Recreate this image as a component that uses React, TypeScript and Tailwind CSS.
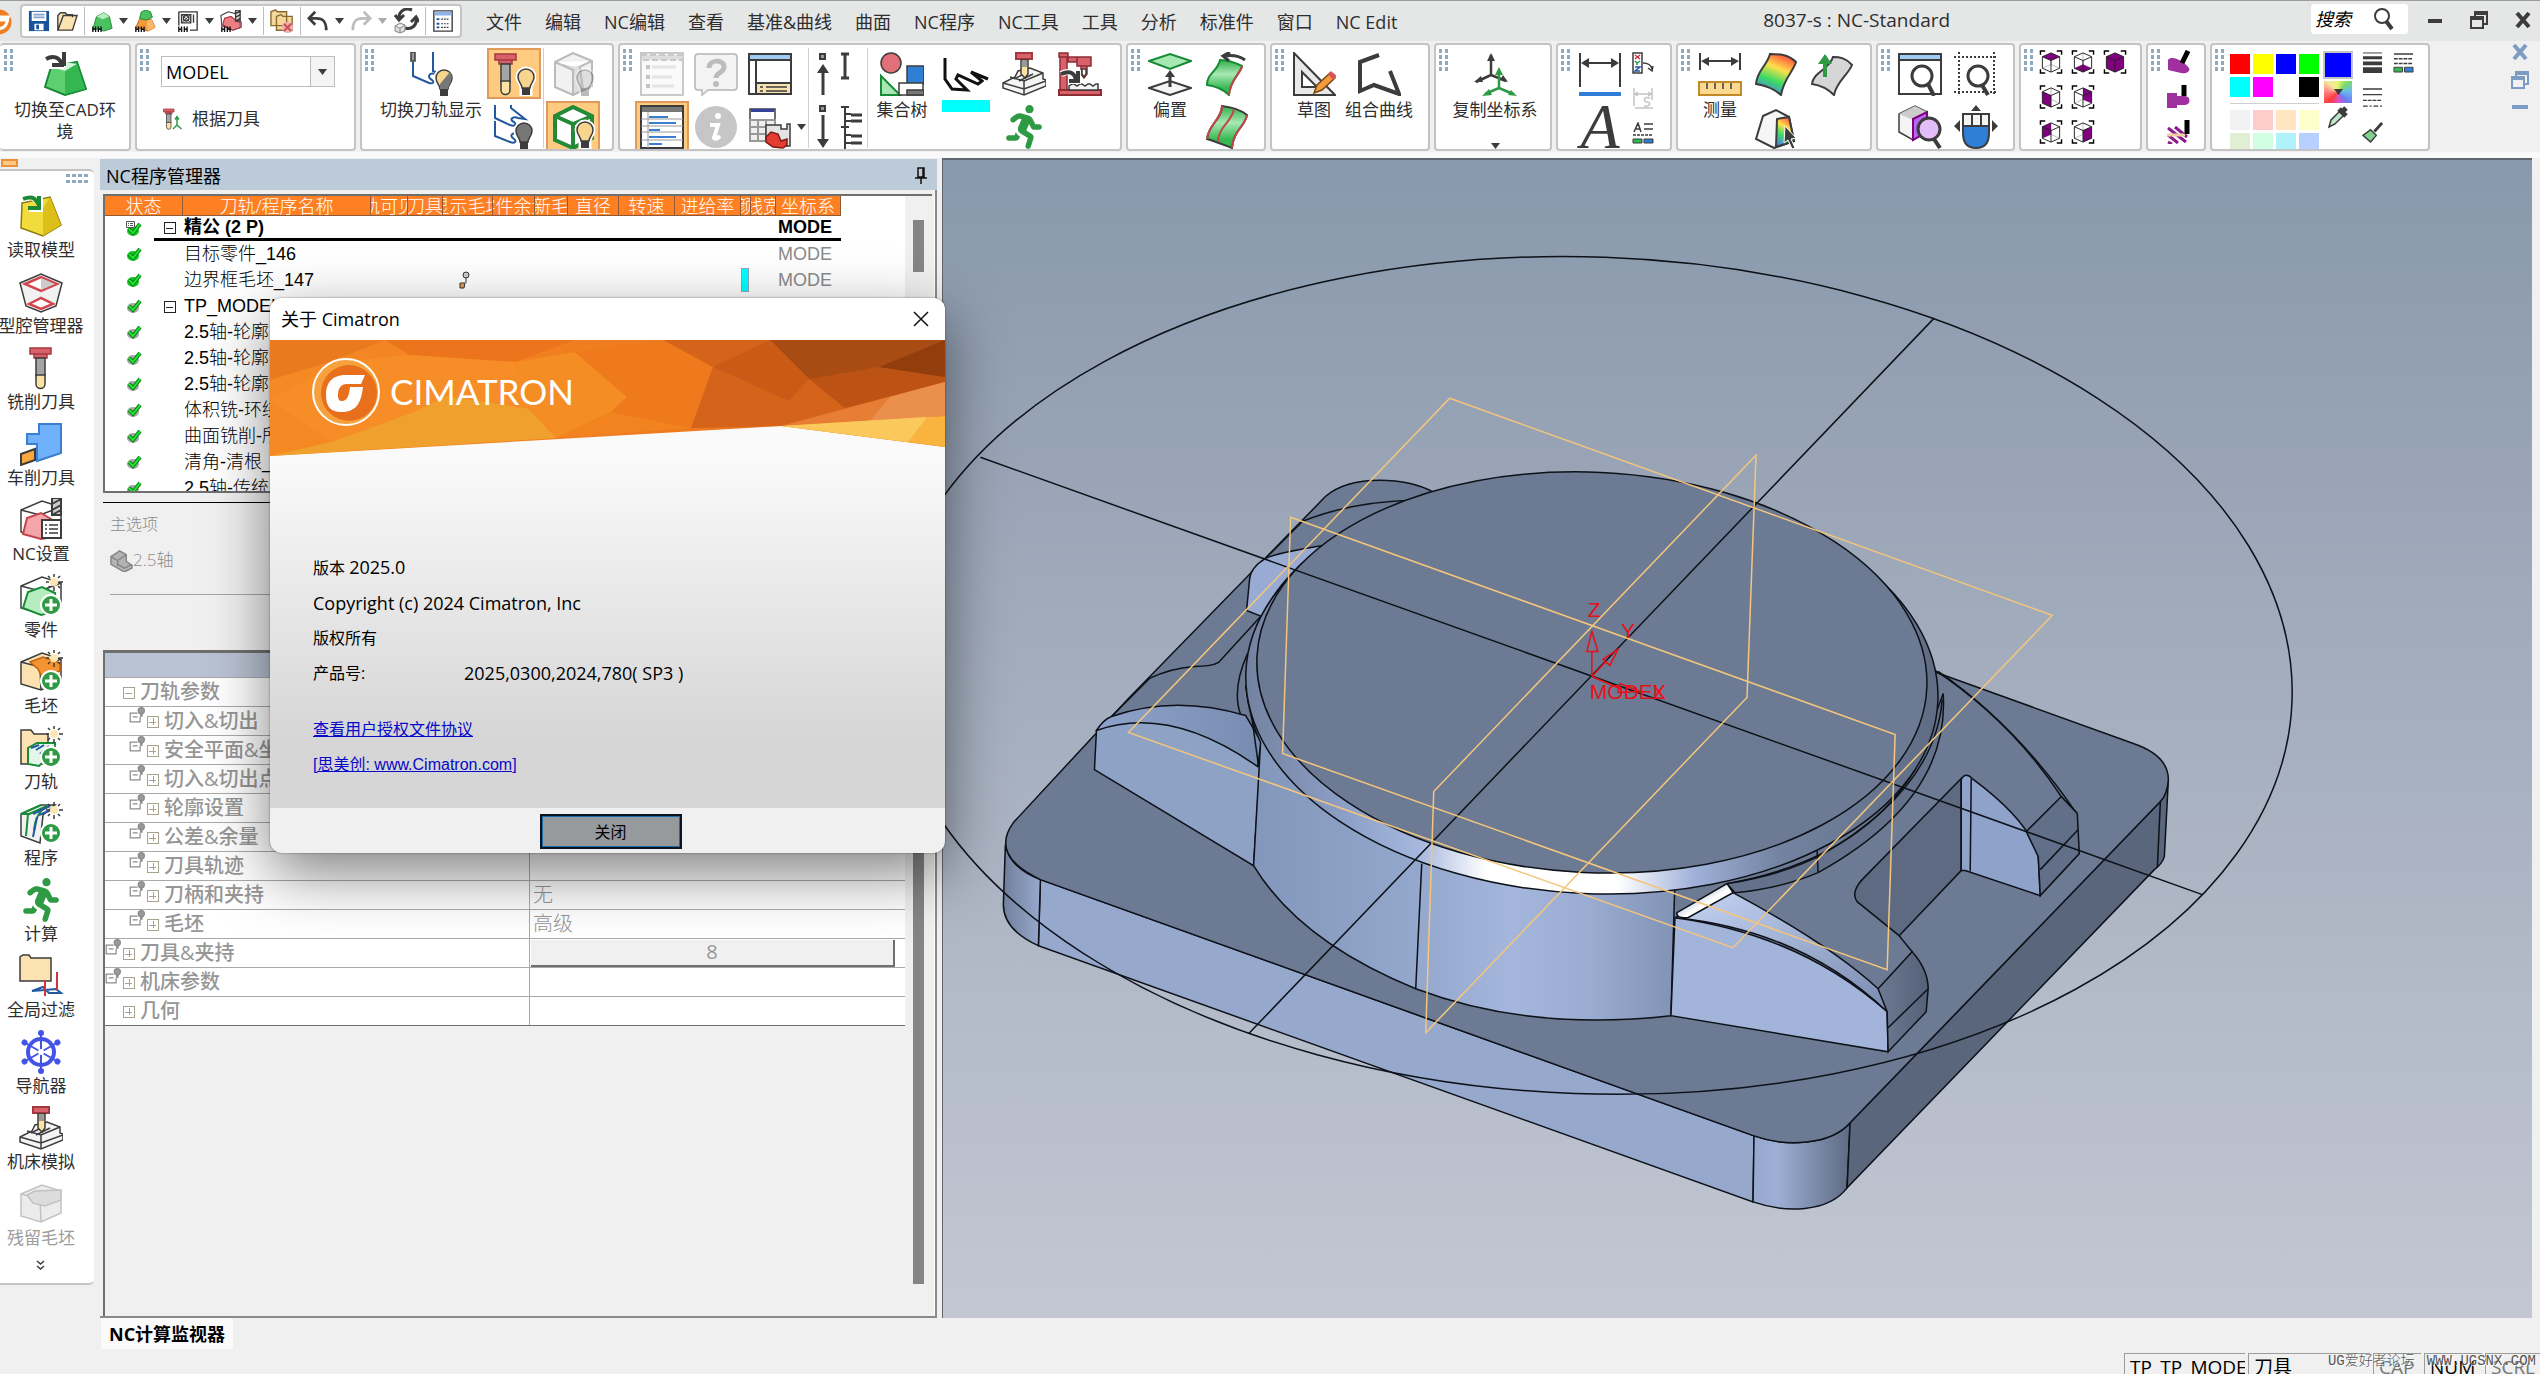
import { useState } from "react";
import type { ReactNode } from "react";
import clsx from "clsx";
import { FaRunning } from "react-icons/fa";

const INK = "#3c3c3c";
const RED = "#d9626a";
const GREEN = "#2f9a44";

function Icon({ size = "size-11", box = "0 0 44 44", children }: { size?: string; box?: string; children: ReactNode }) {
  return (
    <svg className={clsx("block shrink-0", size)} viewBox={box} fill="none" stroke={INK} strokeWidth="2" aria-hidden="true">
      {children}
    </svg>
  );
}

function Bulb({ x, y, fill = "#f7d58e" }: { x: number; y: number; fill?: string }) {
  return (
    <g transform={`translate(${x} ${y})`}>
      <path d="M8 0a9 9 0 0 0-9 9c0 5 4 7 4 11v8h10v-8c0-4 4-6 4-11a9 9 0 0 0-9-9z" fill="#fff" stroke="#fff" strokeWidth="3" />
      <path d="M8 1a8 8 0 0 0-8 8c0 5 4 7 4 11h8c0-4 4-6 4-11a8 8 0 0 0-8-8z" fill={fill} stroke={INK} strokeWidth="1.5" />
      <path d="M4 20h8v7H4z" fill={INK} stroke="none" />
    </g>
  );
}

function Cutter() {
  return (
    <>
      <path d="M7 2h21v6H7zM11 8h13v4H11z" fill={RED} stroke="#a4383f" strokeWidth="1.5" />
      <path d="M13 12h9v18h-9z" fill="#a5a5a5" strokeWidth="1.5" />
      <path d="M13 29h9v9a4.5 4.5 0 0 1-9 0z" fill="#fbe2a0" strokeWidth="1.5" />
    </>
  );
}

function PlusBadge({ x = 23, y = 22 }: { x?: number; y?: number }) {
  return (
    <g transform={`translate(${x} ${y})`}>
      <circle cx="9" cy="9" r="10" fill={GREEN} stroke="#fff" />
      <path d="M9 3v12M3 9h12" stroke="#fff" strokeWidth="3" />
    </g>
  );
}

function Spark() {
  return (
    <g stroke={INK} strokeWidth="1.5">
      <circle cx="35" cy="8" r="4" fill="#fde7b0" stroke="none" />
      <path d="M35 0v3M35 13v4M27 8h3M40 8h4M29 2l2 2M41 2l-2 2M29 14l2-2M41 14l-2-2" />
    </g>
  );
}

function WireBox({ fill = "none", stroke = INK }: { fill?: string; stroke?: string }) {
  return <path d="M2 12l21-9 19 6v22l-20 9-20-6zM2 12l19 5 21-8M21 17l1 23" fill={fill} stroke={stroke} strokeWidth="1.5" />;
}

function Mill() {
  return (
    <>
      <path d="M1 31l12-6 3-6 12-3 13 5v6l3 1v6L22 43 1 36z" fill="#f4f4f4" strokeWidth="1.5" />
      <path d="M1 31l21 6 22-8M8 25l14 4 19-8M22 29v14M12 27l14-7M17 29l14-7" strokeWidth="1.5" />
      <path d="M14 1h16v6H14z" fill={RED} stroke="#a4383f" />
      <path d="M19 8h7v14l-3 4-4-4z" fill="#fbe2a0" strokeWidth="1.5" />
      <path d="M20 8h5v7h-5z" fill="#999" stroke="none" />
    </>
  );
}

function Caret({ muted = false }: { muted?: boolean }) {
  return (
    <svg className="block h-[6px] w-[9px] shrink-0" viewBox="0 0 9 6" fill={muted ? "#aaa" : INK} aria-hidden="true">
      <path d="M0 0h9L4.5 6z" />
    </svg>
  );
}

function IconButton({ label, on = false, className, children }: { label: string; on?: boolean; className?: string; children: ReactNode }) {
  return (
    <button
      type="button"
      aria-label={label}
      aria-pressed={on}
      className={clsx(
        "flex h-[51px] shrink-0 items-center justify-center",
        on && "border-2 border-[#df9a5c] bg-[#ffcb80]",
        className ?? "w-11"
      )}
    >
      {children}
    </button>
  );
}

function LabelButton({ label, className, more = false, children }: { label: string; className: string; more?: boolean; children: ReactNode }) {
  return (
    <button type="button" className={clsx("flex shrink-0 flex-col items-center text-center text-[17px] leading-[22px]", className)}>
      <span className="flex h-[51px] items-center">{children}</span>
      <span>{label}</span>
      {more && (
        <span className="mt-[22px]">
          <Caret />
        </span>
      )}
    </button>
  );
}

function Group({ className, children }: { className: string; children: ReactNode }) {
  return (
    <section className={clsx("flex h-[108px] shrink-0 items-start overflow-hidden rounded-[4px] border-2 border-[#c4c4c4] bg-white pt-[3px]", className)}>
      {children}
    </section>
  );
}

function Grip({ className = "w-5" }: { className?: string }) {
  return (
    <span className={clsx("block shrink-0 pt-px pl-[3px]", className)}>
      <svg className="block h-[22px] w-[10px]" viewBox="0 0 10 22" fill="#8fa9bd" aria-hidden="true">
        {[0, 6, 12, 18].map((y) => (
          <path key={y} d={`M0 ${y}h3v4h-3zM6 ${y}h3v4h-3z`} />
        ))}
      </svg>
    </span>
  );
}

const Rows = ({ children }: { children: ReactNode }) => <div className="flex shrink-0 flex-col gap-[2px]">{children}</div>;
const Rule = () => <span className="mx-[2px] block h-[100px] w-px shrink-0 bg-[#cfcfcf]" />;

const menus = ["文件", "编辑", "NC编辑", "查看", "基准&曲线", "曲面", "NC程序", "NC工具", "工具", "分析", "标准件", "窗口", "NC Edit"];

function QuickAccess() {
  const sep = <span className="h-7 w-px shrink-0 bg-[#bdbdbd]" />;
  const feet = <path d="M2 18v6M5 18v6M2 21h3M8 18v6M11 18v6M8 21h3" stroke="#111" strokeWidth="1.5" />;
  return (
    <div className="flex h-[34px] w-[442px] shrink-0 items-center justify-between rounded-[4px] border-2 border-[#c4c4c4] bg-white px-[6px]">
      <button type="button" aria-label="保存">
        <Icon size="size-[22px]" box="0 0 24 24">
          <path d="M1 1h22v22H1z" fill="#17539c" stroke="none" />
          <path d="M4 2h16v10H4zM7 15h10v7H7z" fill="#fff" stroke="none" />
          <path d="M6 5h12M6 8h12" stroke="#7fa3cc" />
          <path d="M9 16h3v5H9z" fill="#17539c" stroke="none" />
        </Icon>
      </button>
      <button type="button" aria-label="打开">
        <Icon size="size-[22px]" box="0 0 24 24">
          <path d="M2 22V6l3-3h5l2 2h6v3M2 22L8 6h15l-5 16z" fill="#fbe3b0" strokeWidth="1.5" />
        </Icon>
      </button>
      {sep}
      <button type="button" aria-label="新零件">
        <Icon size="size-[22px]" box="0 0 24 24">
          <path d="M2 21L6 7l8-4 6 4 3 13-9 3-5-2z" fill="#49c25f" stroke="#21843a" strokeWidth="1" />
          <path d="M6 7l8-4 6 4-7 3z" fill="#b7ecc0" stroke="none" />
          {feet}
        </Icon>
      </button>
      <Caret />
      <button type="button" aria-label="新装配">
        <Icon size="size-[22px]" box="0 0 24 24">
          <path d="M2 19l4-9h13l4 9-8 4z" fill="#f39a3a" stroke="#b3641a" strokeWidth="1" />
          <path d="M14 12l5-2 4 9-8 4z" fill="#f9b869" stroke="none" />
          <path d="M6 9l2-7 5-2 5 2 2 6-7 3z" fill="#49c25f" stroke="#21843a" strokeWidth="1" />
          {feet}
        </Icon>
      </button>
      <Caret />
      <button type="button" aria-label="新图纸">
        <Icon size="size-[22px]" box="0 0 24 24">
          <path d="M2 2h20v20h-8M2 2v15M5 5h10v9H5zM18 5v9" strokeWidth="1.5" />
          <circle cx="10" cy="9" r="3" strokeWidth="1.5" />
          <path d="M5 5l10 9M15 5L5 14" strokeWidth="1" />
          {feet}
        </Icon>
      </button>
      <Caret />
      <button type="button" aria-label="新NC">
        <Icon size="size-[22px]" box="0 0 24 24">
          <path d="M1 6l8-4 8 2v4l6 5v6l-9 3-12-5z" fill="#fff" strokeWidth="1.2" />
          <path d="M3 16l2-7 7-2 6 5 4 2v5l-8 3z" fill="#ec7f84" stroke="#a4383f" strokeWidth="1.2" />
          <path d="M17 0h5v12h-5zM17 4l5-3M17 8l5-3M17 12l5-3" fill="#ddd" strokeWidth="1.5" />
          {feet}
        </Icon>
      </button>
      <Caret />
      {sep}
      <button type="button" aria-label="关闭文件">
        <Icon size="h-[26px] w-6" box="0 0 26 26">
          <path d="M1 18V3l5-2 2 2h10v15zM7 23V8l5-2 2 2h10v15z" fill="#f3d79b" stroke="#8a6a32" strokeWidth="1.5" />
          <circle cx="19" cy="20" r="6" fill="#e9b1b1" stroke="none" />
          <path d="M15 16l8 8M23 16l-8 8" stroke="#cc4a50" />
        </Icon>
      </button>
      {sep}
      <button type="button" aria-label="撤销">
        <Icon size="size-[22px]" box="0 0 24 24">
          <path d="M9 2L2 9l7 7M3 9h7c8 0 11 4 11 13" strokeWidth="3" />
        </Icon>
      </button>
      <Caret />
      <button type="button" aria-label="重做">
        <Icon size="size-[22px]" box="0 0 24 24">
          <path d="M15 2l7 7-7 7M21 9h-7C6 9 3 13 3 22" stroke="#bcbcbc" strokeWidth="3" />
        </Icon>
      </button>
      <Caret muted />
      <button type="button" aria-label="刷新">
        <Icon size="size-[26px]" box="0 0 26 26">
          <path d="M19 2C12-1 6 3 6 10M2 7l4 5 5-5M12 20c7 2 12-3 11-9M18 14l5-5 3 5" strokeWidth="3" />
          <path d="M2 18l5-3 5 2v6l-5 2-5-2zM2 18l5 2 5-3M7 20v5" fill="#ddd" stroke="#888" strokeWidth="1" />
        </Icon>
      </button>
      {sep}
      <button type="button" aria-label="列表">
        <Icon size="size-[22px]" box="0 0 24 24">
          <path d="M2 1h20v22H2z" fill="#fff" strokeWidth="1.5" />
          <path d="M3 2h18v4H3z" fill="#8cb4ea" stroke="none" />
          <path d="M5 10h3M5 15h3M5 19h3" stroke="#17539c" />
          <path d="M10 10h9M10 15h9M10 19h9" strokeDasharray="2 1" strokeWidth="1.2" />
        </Icon>
      </button>
    </div>
  );
}

const restore = <path d="M5 6V1h12v12h-4M1 6h12v11H1zM1 8h12M5 3h12" />;

function TitleBar() {
  return (
    <header className="flex h-[41px] shrink-0 items-start border-t border-[#9c9c9c] bg-[#e5e6e6] pt-[3px]">
      <svg className="mt-[5px] mr-[8px] block h-[26px] w-3 shrink-0" viewBox="14 0 12 26" aria-hidden="true">
        <circle cx="13" cy="13" r="12.5" fill="#ef7d22" />
        <path d="M10 8h12l-2 3h-7M22 8c-1 9-4 12-12 12" fill="none" stroke="#fff" strokeWidth="3" />
      </svg>
      <QuickAccess />
      <nav className="ml-[24px] flex shrink-0 gap-[23px] pt-[6px] text-[18px] leading-6 whitespace-nowrap">
        {menus.map((m) => (
          <button key={m} type="button">
            {m}
          </button>
        ))}
      </nav>
      <p className="grow pl-[5px] text-center text-[19px] leading-8 whitespace-nowrap">8037-s : NC-Standard</p>
      <label className="mr-[18px] flex h-[30px] w-[97px] shrink-0 items-center rounded-[3px] bg-white px-1">
        <input
          aria-label="搜索"
          placeholder="搜索"
          className="w-14 min-w-0 bg-transparent text-[18px] leading-6 text-black italic outline-none placeholder:text-black"
        />
        <Icon size="size-[24px]" box="0 0 24 24">
          <circle cx="11" cy="9" r="7" />
          <path d="M15 14l6 8" strokeWidth="4" />
        </Icon>
      </label>
      <div className="flex w-[114px] shrink-0 items-center gap-[26px] pt-[7px]">
        <button type="button" aria-label="最小化">
          <Icon size="size-[18px]" box="0 0 18 18">
            <path d="M2 10h14" strokeWidth="4" />
          </Icon>
        </button>
        <button type="button" aria-label="还原">
          <Icon size="size-[18px]" box="0 0 18 18">{restore}</Icon>
        </button>
        <button type="button" aria-label="退出">
          <Icon size="size-[18px]" box="0 0 18 18">
            <path d="M3 2l12 14M15 2L3 16" strokeWidth="4" />
          </Icon>
        </button>
      </div>
    </header>
  );
}

const faces = {
  top: "M3 7l9-4 9 4-9 4z",
  bottom: "M3 19l9-4 9 4-9 4z",
  left: "M3 7l9 4v12l-9-4z",
  back: "M12 3l9 4v12l-9-4z",
  rear: "M3 7l9-4v12l-9 4z",
  right: "M12 11l9-4v12l-9 4z",
  all: "M3 7l9-4 9 4v12l-9 4-9-4z",
};

function ViewCube({ face }: { face: keyof typeof faces }) {
  return (
    <button type="button" aria-label={`视图 ${face}`}>
      <Icon size="size-6" box="0 0 24 25">
        <path d="M12 3v12l9 4M12 15l-9 4" stroke="#bbb" strokeWidth="1" />
        <path d={faces[face]} fill="#800080" stroke="none" />
        <path d={`${faces.all}M3 7l9 4 9-4M12 11v12`} stroke="#222" strokeWidth="1" />
        <path d="M1 5V1h5M18 1h5v4M1 20v4h5M18 24h5v-4" stroke="#000" strokeWidth="1.5" />
      </Icon>
    </button>
  );
}

const strong = ["bg-[#ff0000]", "bg-[#ffff00]", "bg-[#0000ff]", "bg-[#00ff00]", "bg-[#00ffff]", "bg-[#ff00ff]", "bg-white", "bg-black"];
const pale = ["bg-[#f2f2f4]", "bg-[#ffcccc]", "bg-[#ffe6c0]", "bg-[#ffffcc]", "bg-[#e0efd4]", "bg-[#d0ffe4]", "bg-[#b0f2fa]", "bg-[#b8d0ff]"];

function Swatches({ colors }: { colors: string[] }) {
  return (
    <div className="grid grid-cols-4 gap-[3px]">
      {colors.map((c) => (
        <button key={c} type="button" aria-label={c} className={clsx("size-5", c)} />
      ))}
    </div>
  );
}

function Ribbon() {
  return (
    <div className="flex shrink-0 items-start gap-1 border-b-[6px] border-[#fafafa] bg-[#f0f0f0] pt-[2px] pb-[1px] text-[#2e2e2e]">
      <Group className="w-[131px] border-l-0 pl-[1px]">
        <Grip className="w-2" />
        <LabelButton label="切换至CAD环境" className="w-[112px]">
          <Icon>
            <path d="M8 15l26-5 9 27-21 6-20-8z" fill="#5dcf70" stroke="#178c36" />
            <path d="M8 15l13-5 13 2-12 7z" fill="#d5f5da" stroke="none" />
            <path d="M22 19v23l20-5-8-25z" fill="#34b650" stroke="none" />
            <path d="M3 7c8-6 16-2 17 6M20 0v15M6 14h15" stroke="#fff" strokeWidth="6" />
            <path d="M3 7c7-4 13-2 16 5M21 0v14M9 13h12" strokeWidth="4" />
          </Icon>
        </LabelButton>
      </Group>
      <Group className="w-[221px]">
        <Grip className="w-6" />
        <div className="flex flex-col gap-[20px] pt-2">
          <div className="flex h-[31px] w-[174px] items-stretch border border-[#bdbdbd]">
            <select aria-label="坐标系" className="w-[148px] appearance-none bg-white pl-1 text-[18px] leading-7 text-black">
              <option>MODEL</option>
            </select>
            <span className="flex w-[24px] items-center justify-center border-l border-[#bdbdbd] bg-[#f4f4f6]">
              <Caret />
            </span>
          </div>
          <button type="button" className="flex items-center gap-[9px] text-[17px] leading-6">
            <Icon size="size-[22px]" box="4 0 40 44">
              <Cutter />
              <path d="M34 18v16l-8 8M34 34l9 8M30 23l4-6 4 6" stroke={GREEN} strokeWidth="3" />
            </Icon>
            根据刀具
          </button>
        </div>
      </Group>
      <Group className="w-[254px]">
        <Grip className="w-[18px]" />
        <LabelButton label="切换刀轨显示" className="mr-[5px] w-[102px]">
          <Icon>
            <path d="M2 0v9h4V0z" fill="#999" strokeWidth="1.5" />
            <path d="M4 10v14l16 7c4 1 6-1 3-3-6-3-2-8 3-6M24 0v19l8 3" stroke="#235a9f" />
            <Bulb x={27} y={17} />
            <path d="M41 20c4 5 0 10-2 17h-8v-5z" fill="#777" stroke="none" />
          </Icon>
        </LabelButton>
        <Rows>
          <IconButton label="显示刀具" on className="w-[54px]">
            <Icon>
              <g transform="translate(-4 0)">
                <Cutter />
              </g>
              <Bulb x={26} y={16} />
            </Icon>
          </IconButton>
          <IconButton label="显示刀轨" className="w-[54px]">
            <Icon>
              <path
                d="M3 0v13l15 7c5 2 7-1 4-3-6-3 0-6 4-4l7 1-14-11V0M3 16v15l15 6c5 2 7-1 4-3-6-4 0-7 3-5"
                stroke="#235a9f"
              />
              <Bulb x={24} y={17} fill="#777" />
            </Icon>
          </IconButton>
        </Rows>
        <Rule />
        <Rows>
          <IconButton label="显示零件" className="w-[54px]">
            <Icon>
              <path d="M4 10L22 1l19 8v25l-19 9-18-8zM4 10l18 8 19-9M22 18v25" fill="#f1f1f1" stroke="#bbb" />
              <path d="M12 13l10 5v25l10-5-3-23" fill="#ddd" stroke="#bbb" />
              <g opacity=".35">
                <Bulb x={26} y={17} fill="#bbb" />
              </g>
            </Icon>
          </IconButton>
          <IconButton label="显示毛坯" on className="w-[54px]">
            <Icon>
              <path d="M4 11L22 2l19 9v22l-19 10-18-8z" fill="#fff" stroke="#238a38" strokeWidth="4" />
              <path d="M4 11l18 8 19-8M22 19v23" stroke="#238a38" strokeWidth="4" />
              <Bulb x={26} y={16} />
            </Icon>
          </IconButton>
        </Rows>
      </Group>
      <Group className="w-[504px]">
        <Grip className="w-[15px]" />
        <Rows>
          <IconButton label="列表" className="w-[54px]">
            <Icon>
              <path d="M1 1h42v42H1z" fill="#fafafa" stroke="#c9c9c9" />
              <path d="M1 3h42v5H1z" fill="#ddd" stroke="#c9c9c9" strokeDasharray="6 3" />
              <path d="M12 15h24M12 25h20M12 34h22" stroke="#e4e4e4" strokeWidth="3" />
              <path d="M6 15h4M6 25h4M6 34h4" stroke="#c4c4c4" strokeWidth="4" />
            </Icon>
          </IconButton>
          <IconButton label="程序管理器" on className="w-[54px]">
            <Icon>
              <path d="M1 1h42v42H1z" fill="#fff" />
              <path d="M2 2h40v5H2z" fill="#777" stroke="none" />
              <path d="M1 14h42M1 21h42M1 27h42M1 35h42M8 7v36" stroke="#999" strokeWidth="1" />
              <path d="M9 12h19M9 18h27M9 25h11M9 32h27M9 39h13" stroke="#3a7fd0" />
            </Icon>
          </IconButton>
        </Rows>
        <Rows>
          <IconButton label="帮助" className="w-[54px]">
            <Icon>
              <path d="M4 2h36q3 0 3 3v30q0 3-3 3H14l-6 5v-5H4q-3 0-3-3V5q0-3 3-3z" fill="#f3f3f3" stroke="#c4c4c4" />
              <path d="M15 16c0-9 15-9 15-1 0 6-8 5-8 11" stroke="#bcbcbc" strokeWidth="5" />
              <circle cx="22" cy="32" r="3" fill="#bcbcbc" stroke="none" />
            </Icon>
          </IconButton>
          <IconButton label="信息" className="w-[54px]">
            <Icon>
              <circle cx="22" cy="22" r="21" fill="#c6c6c6" stroke="none" />
              <circle cx="24" cy="11" r="3" fill="#fff" stroke="none" />
              <path d="M16 20h8l-4 13q2 2 6-2" stroke="#fff" strokeWidth="4" />
            </Icon>
          </IconButton>
        </Rows>
        <Rows>
          <IconButton label="布局" className="w-[54px]">
            <Icon>
              <path d="M1 2h42v40H1z" fill="#fff" />
              <path d="M2 3h40v4H2z" fill="#9fcbf5" stroke="none" />
              <path d="M1 8h42M8 8v34" />
              <path d="M8 31h35v11H8z" fill="#f6e2b0" />
              <path d="M12 35h3M12 39h3M18 35h21M18 39h21" strokeWidth="1.5" />
            </Icon>
          </IconButton>
          <div className="flex items-center">
            <IconButton label="报告" className="w-[54px]">
              <Icon>
                <path d="M2 4h25v11H2z" fill="#fff" strokeWidth="1.5" />
                <path d="M3 4h23v3H3z" fill="#33429a" stroke="none" />
                <path d="M2 15h25v21H2zM2 22h22M2 29h18M10 15v20M18 15v20" fill="#eee" stroke="#999" />
                <path d="M18 20h15v4h6v-5h3v22H26l-8-6z" fill="#e4e4e4" strokeWidth="1.5" />
                <path d="M18 32l5-5 7 2 3 7 6-2v6l-4 3-10-1-7-5z" fill="#e43c30" stroke="#7c1a14" strokeWidth="1.5" />
              </Icon>
            </IconButton>
            <Caret />
          </div>
        </Rows>
        <Rule />
        <Rows>
          <IconButton label="上移" className="w-6">
            <Icon size="h-11 w-5" box="0 0 20 44">
              <path d="M7 2h5v5H7z" fill="#999" />
              <path d="M10 43V18" strokeWidth="3" />
              <path d="M4 21l6-9 6 9z" fill={INK} stroke="none" />
            </Icon>
          </IconButton>
          <IconButton label="下移" className="w-6">
            <Icon size="h-11 w-5" box="0 0 20 44">
              <path d="M7 1h5v5H7z" fill="#999" />
              <path d="M10 10v26" strokeWidth="3" />
              <path d="M4 34l6 9 6-9z" fill={INK} stroke="none" />
            </Icon>
          </IconButton>
        </Rows>
        <Rows>
          <IconButton label="展开" className="w-[30px]">
            <Icon size="h-11 w-6" box="0 0 24 44">
              <path d="M3 2h8M7 2v24M3 26h8" strokeWidth="3" />
            </Icon>
          </IconButton>
          <IconButton label="折叠" className="w-[30px]">
            <Icon size="h-11 w-6" box="0 0 24 44">
              <path d="M3 2h8M7 2v42M7 9h6M7 16h6M3 22h8M7 30h6M7 38h6" />
              <path d="M13 10h11M13 16h11M13 31h11M13 38h11" strokeWidth="3" />
            </Icon>
          </IconButton>
        </Rows>
        <Rule />
        <LabelButton label="集合树" className="ml-[5px] w-[54px]">
          <Icon>
            <circle cx="11" cy="11" r="10" fill="#e27078" strokeWidth="1.5" />
            <path d="M27 14h17v18H27z" fill="#2f7fd6" strokeWidth="1.5" />
            <path d="M1 24v19h19z" fill="#a9e6b5" stroke="#178c36" />
            <path d="M19 31h24v12H19z" fill="#fff" strokeWidth="1.5" />
            <path d="M27 38h17v5H27z" fill="#777" strokeWidth="1.5" />
          </Icon>
        </LabelButton>
        <button type="button" aria-label="刀轨颜色" className="ml-[13px] flex flex-col gap-1 pt-[10px]">
          <Icon size="h-9 w-12" box="0 0 48 36">
            <path d="M3 0v21l7 10 15 1-11-11 2-4 20 9 4-3-11-9 17 7" stroke="#111" strokeWidth="3" />
          </Icon>
          <span className="mt-[2px] block h-3 w-12 bg-[#00ffff]" />
        </button>
        <Rows>
          <IconButton label="机床模拟" className="ml-[12px] w-11">
            <Icon>
              <Mill />
            </Icon>
          </IconButton>
          <IconButton label="计算" className="ml-[12px] w-11">
            <FaRunning className="size-11 text-[#2f9a44]" />
          </IconButton>
        </Rows>
        <IconButton label="机床" className="ml-[12px] w-11">
          <Icon>
            <path d="M1 1h9v4H1zM2 5h7v34H2zM10 5h9v5h-9zM19 5h14v9H19zM23 14h6v8l-3 4-3-4z" fill={RED} stroke="#8c2d34" strokeWidth="1.5" />
            <path d="M24 17h4v5l-2 3-2-3z" fill="#fff" strokeWidth="1.5" />
            <path d="M1 38h42v5H1z" fill={RED} stroke="#8c2d34" />
            <path d="M11 34l3-2h2l3 2 3-2h2l3 2 3-2h2l3 2 3-2h2v6H11z" fill="#f4f4f4" strokeWidth="1.5" />
            <path d="M3 22c10-5 14 0 15 6M20 18v11h-9" stroke="#fff" strokeWidth="6" />
            <path d="M3 22c9-4 13-1 15 5M20 19v10h-9" strokeWidth="4" />
          </Icon>
        </IconButton>
      </Group>
      <Group className="w-[140px]">
        <Grip />
        <LabelButton label="偏置" className="w-11">
          <Icon>
            <path d="M1 9l21-7 21 7-21 8z" fill="#a6e8b2" stroke="#178c36" />
            <path d="M1 36l21-7 21 7-21 7z" fill="#f4f4f4" />
            <path d="M22 35V22" strokeWidth="3" />
            <path d="M17 25l5-7 5 7z" fill={INK} stroke="none" />
          </Icon>
        </LabelButton>
        <div className="ml-[12px]">
          <Rows>
            <IconButton label="曲面偏置">
              <Icon>
                <defs>
                  <linearGradient id="leaf" x1="0" y1="0" x2="0" y2="1">
                    <stop offset="0" stopColor="#2fb04a" />
                    <stop offset=".4" stopColor="#a8e8b3" />
                    <stop offset=".8" stopColor="#37b852" />
                  </linearGradient>
                </defs>
                <path d="M16 8c8 0 14 2 22 6-1 7-12 14-13 29C18 36 10 34 3 33c0-12 11-14 13-25z" fill="url(#leaf)" stroke="#178c36" />
                <path d="M38 14c-1 7-12 14-13 29" stroke="#c5444c" />
                <path d="M41 8C34 3 28 3 21 4M26 0l-7 4 6 5" strokeWidth="3" />
              </Icon>
            </IconButton>
            <IconButton label="曲面分割">
              <Icon>
                <path d="M18 1c8 1 18 3 25 9-1 10-14 16-15 33C20 40 10 36 3 34 4 20 18 14 18 1z" fill="url(#leaf)" />
                <path d="M18 1c0 13-14 19-15 33M30 4c-2 13-16 18-16 33M43 10c-1 10-14 16-15 33" stroke="#c5444c" />
              </Icon>
            </IconButton>
          </Rows>
        </div>
      </Group>
      <Group className="w-[160px]">
        <Grip />
        <LabelButton label="草图" className="w-11">
          <Icon>
            <path d="M2 1v42h41zM10 20v15h15z" fill="#e9e9e9" fillRule="evenodd" />
            <path d="M22 41l3-8 13-12 5 5-13 12z" fill="#f09b3e" strokeWidth="1.5" stroke="#7d4712" />
            <path d="M36 22l3-3 6 5-4 4z" fill="#d9535a" stroke="none" />
          </Icon>
        </LabelButton>
        <LabelButton label="组合曲线" className="ml-2 w-[70px]">
          <Icon>
            <path d="M22 3L3 10v29l14-6 25 9-9-23" strokeWidth="4" />
          </Icon>
        </LabelButton>
      </Group>
      <Group className="w-[118px]">
        <Grip className="w-[15px]" />
        <LabelButton label="复制坐标系" className="w-[88px]" more>
          <Icon>
            <path d="M18 3v20M18 23L3 30M18 23l15 6" strokeWidth="2.5" />
            <path d="M14 9l4-8 4 8zM1 30l7-6 2 6zM35 30l-8-2 3-5z" fill={INK} stroke="none" />
            <path d="M26 20v16M26 36l-14 6M26 36l14 6" stroke={GREEN} strokeWidth="2.5" />
            <path d="M22 23l4-8 4 8zM9 44l7-7 3 6zM44 44l-9-1 3-5z" fill={GREEN} stroke="none" />
          </Icon>
        </LabelButton>
      </Group>
      <Group className="w-[116px]">
        <Grip />
        <Rows>
          <IconButton label="尺寸">
            <Icon>
              <path d="M2 1v34M42 1v34M5 11h34" />
              <path d="M3 11l8-5v10zM41 11l-8-5v10z" fill={INK} stroke="none" />
              <path d="M1 42h42" stroke="#2f7fd6" strokeWidth="4" />
            </Icon>
          </IconButton>
          <IconButton label="文字">
            <span className="font-['Liberation_Serif',serif] text-[64px] leading-[50px] text-[#3c3c3c] italic">A</span>
          </IconButton>
        </Rows>
        <div className="ml-[10px] flex flex-col gap-[13px] pt-1">
          <Icon size="size-[22px]" box="0 0 22 22">
            <path d="M1 1h9v20H1z" fill="#fff" strokeWidth="1.5" />
            <path d="M3 3l5 4M8 3L3 7" stroke="#cc3030" strokeWidth="1.5" />
            <path d="M3 9l2 2 3-2M5 11v2" stroke={GREEN} strokeWidth="1.5" />
            <path d="M3 15h5l-5 4h5" stroke="#235a9f" strokeWidth="1.5" />
            <path d="M11 11c5 0 8 2 9 6M16 16l4 3 1-5" strokeWidth="1.5" />
          </Icon>
          <Icon size="size-[22px]" box="0 0 22 22">
            <path
              d="M2 1v18M20 1v12M4 7h14M6 5L3 7l3 2M16 5l3 2-3 2M3 21h18M18 11c-7-2-7 4-3 4s4 5-3 4"
              stroke="#c4c4c4"
              strokeWidth="1.5"
            />
          </Icon>
          <Icon size="size-[22px]" box="0 0 22 22">
            <path d="M2 10l4-9 3 9M3 7h5M12 2h9M12 7h9" strokeWidth="1.5" />
            <path d="M1 13h20" strokeDasharray="3 1" strokeWidth="1.5" />
            <path d="M1 17h9v4H1z" fill="#34b650" strokeWidth="1" />
            <path d="M12 17h9v4h-9z" fill="#2f7fd6" strokeWidth="1" />
          </Icon>
        </div>
      </Group>
      <Group className="w-[196px]">
        <Grip />
        <LabelButton label="测量" className="w-11">
          <Icon>
            <path d="M2 1v17M42 1v17M5 9h34" />
            <path d="M3 9l8-4v9zM41 9l-8-4v9z" fill={INK} stroke="none" />
            <path d="M1 30h42v13H1z" fill="#fbd98f" stroke="#c08a28" />
            <path d="M9 31v6M17 31v6M25 31v6M33 31v6" strokeWidth="1.5" />
          </Icon>
        </LabelButton>
        <div className="ml-[12px]">
          <Rows>
            <IconButton label="曲率">
              <Icon>
                <defs>
                  <linearGradient id="rainbow" x1=".7" y1="0" x2=".3" y2="1">
                    <stop offset="0" stopColor="#ff4a3c" />
                    <stop offset=".35" stopColor="#ffe04a" />
                    <stop offset=".65" stopColor="#3ddb62" />
                    <stop offset="1" stopColor="#4f7df0" />
                  </linearGradient>
                </defs>
                <path d="M16 2c8 0 18 0 26 8-3 10-12 16-15 33C19 36 9 33 2 32 3 18 13 14 16 2z" fill="url(#rainbow)" />
              </Icon>
            </IconButton>
            <IconButton label="拔模分析">
              <Icon>
                <path d="M9 11l13-6 13 7 5 24-20 7-18-9z" fill="#f6f6f6" />
                <path d="M23 14l12-2 5 24-18 6z" fill="url(#rainbow)" />
                <path d="M31 21l11 12-5 1 4 9-3 1-4-9-4 3z" fill={INK} stroke="#fff" strokeWidth="1" />
              </Icon>
            </IconButton>
          </Rows>
        </div>
        <IconButton label="方向" className="ml-[12px] w-11">
          <Icon>
            <path d="M23 5c7 0 13 1 19 8-4 10-15 16-18 30-7-7-15-10-22-11 1-12 17-14 21-27z" fill="#d6d6d6" />
            <path d="M15 25V8" stroke={GREEN} strokeWidth="4" />
            <path d="M8 12l7-10 7 10z" fill={GREEN} stroke="none" />
          </Icon>
        </IconButton>
      </Group>
      <Group className="w-[139px]">
        <Grip />
        <Rows>
          <IconButton label="全部缩放">
            <Icon>
              <path d="M1 2h42v40H1z" fill="#fff" />
              <path d="M2 3h40v4H2z" fill="#9fcbf5" stroke="none" />
              <path d="M1 8h42" />
              <circle cx="24" cy="24" r="10" fill="#fff" strokeWidth="3" />
              <path d="M30 32l6 12" strokeWidth="4" />
            </Icon>
          </IconButton>
          <IconButton label="选择缩放">
            <Icon>
              <path d="M1 9l16-8 12 6v20l-14 8-14-8z" fill="#f4f4f4" strokeWidth="1.5" />
              <path d="M1 9l14 6 14-8-12-6z" fill="#ccc" stroke="none" />
              <path d="M15 14l14-7v20l-14 8z" fill="#b865f0" stroke="#800080" />
              <circle cx="31" cy="24" r="11" fill="#e3bdf7" strokeWidth="3" />
              <path d="M36 34l6 9" strokeWidth="4" />
            </Icon>
          </IconButton>
        </Rows>
        <div className="ml-[12px]">
          <Rows>
            <IconButton label="窗口缩放">
              <Icon>
                <path d="M0 5h44M0 40h44M5 0v44M40 0v44" strokeDasharray="2 2" />
                <circle cx="24" cy="24" r="10" fill="#fff" strokeWidth="3" />
                <path d="M28 33l6 10" strokeWidth="4" />
              </Icon>
            </IconButton>
            <IconButton label="鼠标">
              <Icon>
                <path d="M9 9h26v19q0 15-13 15T9 28z" fill="#2f7fd6" />
                <path d="M9 9h26v12H9zM18 9v12M27 9v12" fill="#f4f4f4" />
                <path d="M17 6l5-6 5 6zM6 15l-6 6 6 6zM38 15l6 6-6 6z" fill={INK} stroke="none" />
              </Icon>
            </IconButton>
          </Rows>
        </div>
      </Group>
      <Group className="w-[123px]">
        <Grip className="w-[18px]" />
        <div className="grid grid-cols-3 gap-x-2 gap-y-[11px] pt-[2px]">
          <ViewCube face="top" />
          <ViewCube face="bottom" />
          <ViewCube face="all" />
          <ViewCube face="left" />
          <ViewCube face="back" />
          <span />
          <ViewCube face="rear" />
          <ViewCube face="right" />
        </div>
      </Group>
      <Group className="w-[60px]">
        <Grip className="w-[19px]" />
        <div className="flex flex-col gap-[11px] pt-[2px]">
          <Icon size="size-6" box="0 0 24 24">
            <path d="M1 20V10c2-3 6-2 9-1 5 2 9 5 12 9 2 4-4 6-8 5z" fill="#a030a0" stroke="none" />
            <path d="M21 1l-6 12" stroke="#000" strokeWidth="5" />
          </Icon>
          <Icon size="size-6" box="0 0 24 24">
            <path d="M0 8h10v3h8c6 0 6 9 0 9h-8v3H0z" fill="#a030a0" stroke="none" />
            <path d="M17 0v11" stroke="#000" strokeWidth="5" />
          </Icon>
          <Icon size="size-6" box="0 0 24 24">
            <path d="M1 8l18 14M1 15l10 8M8 7l12 10M1 22l4 2" stroke="#8c1c8c" strokeWidth="3" />
            <path d="M0 15h18" stroke="#f0cfa0" strokeWidth="3" />
            <path d="M20 0v14" stroke="#000" strokeWidth="5" />
          </Icon>
        </div>
      </Group>
      <Group className="w-[220px]">
        <Grip className="w-[18px]" />
        <div className="flex flex-col gap-[6px] pt-[6px]">
          <Swatches colors={strong} />
          <span className="block h-px bg-[#d0d0d0]" />
          <Swatches colors={pale} />
        </div>
        <div className="ml-[4px] flex flex-col items-center gap-[2px] pt-[3px]">
          <button type="button" aria-label="当前颜色" className="h-7 w-[30px] border-2 border-[#c4c4c4] bg-[#0000ff]" />
          <button
            type="button"
            aria-label="更多颜色"
            className="flex h-[22px] w-7 items-center justify-center bg-[conic-gradient(#e8f56b,#7bdc6a,#6bb7f5,#6b7bf0,#e052c0,#ff3b3b,#ff8080,#f5e6a0,#e8f56b)]"
          >
            <Caret />
          </button>
          <Icon size="size-6" box="0 0 24 24">
            <path d="M3 22l2-7 9-9 4 4-9 9z" fill="#bfe8c8" strokeWidth="1.5" />
            <path d="M13 4l7 7M16 7l4-4" strokeWidth="5" />
          </Icon>
        </div>
        <div className="ml-[9px] flex flex-col gap-[14px] pt-[4px]">
          <Icon size="size-[21px]" box="0 0 22 22">
            <path d="M1 1h20" strokeWidth="1" />
            <path d="M1 6h20" strokeWidth="3" />
            <path d="M1 12h20" strokeWidth="4" />
            <path d="M1 19h20" strokeWidth="6" />
          </Icon>
          <Icon size="size-[21px]" box="0 0 22 22">
            <path d="M1 2h20M1 8h20" strokeWidth="1.5" />
            <path d="M1 14h20" strokeDasharray="4 1" strokeWidth="1.5" />
            <path d="M1 20h20" strokeDasharray="5 2 2 2" strokeWidth="1.5" />
          </Icon>
          <Icon size="size-[21px]" box="0 0 22 22">
            <path d="M21 1l-8 9" strokeWidth="3" />
            <path d="M9 8l6 6-6 7-8-7z" fill="#7fd391" strokeWidth="1.5" />
          </Icon>
        </div>
        <div className="ml-[10px] pt-[4px]">
          <Icon size="size-[21px]" box="0 0 22 22">
            <path d="M1 2h20" strokeWidth="1.5" />
            <path d="M1 7h20M1 12h20" strokeDasharray="4 1" strokeWidth="1.5" />
            <path d="M1 16h9v5H1z" fill="#34b650" strokeWidth="1" />
            <path d="M12 16h9v5h-9z" fill="#2f7fd6" strokeWidth="1" />
          </Icon>
        </div>
      </Group>
      <div className="mr-[11px] ml-auto flex shrink-0 flex-col gap-[10px]">
        <Icon size="size-[18px]" box="0 0 18 18">
          <path d="M3 2l12 14M15 2L3 16" stroke="#7c9cc4" strokeWidth="4" />
        </Icon>
        <Icon size="size-[18px]" box="0 0 18 18">
          <g stroke="#7c9cc4">{restore}</g>
        </Icon>
        <Icon size="size-[18px]" box="0 0 18 18">
          <path d="M1 8h16" stroke="#7c9cc4" strokeWidth="4" />
        </Icon>
      </div>
    </div>
  );
}

const tools: { label: string; muted?: boolean; icon: ReactNode }[] = [
  {
    label: "读取模型",
    icon: (
      <Icon>
        <path d="M3 9l28-6 11 28-18 11-22-8z" fill="#f2dc3c" stroke="#8a7a10" strokeWidth="1.5" />
        <path d="M24 14l7-11 11 28-18 11z" fill="#dcc018" stroke="none" />
        <path d="M4 5c8-3 12-2 15 4M21 3v12H10" stroke="#fff" strokeWidth="6" />
        <path d="M4 5c8-3 12-2 15 5M20 2v12H9" stroke="#1c8a34" strokeWidth="4" />
      </Icon>
    ),
  },
  {
    label: "型腔管理器",
    icon: (
      <Icon>
        <path d="M1 13L22 4l21 9-6 23-15 6-15-6z" fill="#f1f1f1" strokeWidth="1.5" />
        <path d="M6 14l16-7 16 7-16 7zM10 34l12-6 12 6-12 5z" fill="#fff" stroke="#d2454d" strokeWidth="2.5" />
        <path d="M22 8v12l14-6z" fill="#ccc" stroke="none" />
      </Icon>
    ),
  },
  {
    label: "铣削刀具",
    icon: (
      <Icon box="-4 0 44 44">
        <Cutter />
      </Icon>
    ),
  },
  {
    label: "车削刀具",
    icon: (
      <Icon>
        <path d="M8 22V12h12V2h22v29L18 39V22z" fill="#6fb1fa" stroke="#3b7fd0" />
        <path d="M2 32l14-5v11L2 43z" fill="#fba73f" />
      </Icon>
    ),
  },
  {
    label: "NC设置",
    icon: (
      <Icon>
        <WireBox />
        <path d="M4 36l4-16 14-5 10 6 3 18-13 2z" fill="#f3a5aa" stroke="#c5444c" />
        <path d="M33 0h9v17h-9zM33 6l9-5M33 12l9-5M33 17l9-5" fill="#ccc" />
        <path d="M23 22h19v18H23z" fill="#fff" />
        <path d="M26 27h2M26 31h2M26 35h2M30 27h9M30 31h9M30 35h9" strokeWidth="1.5" />
      </Icon>
    ),
  },
  {
    label: "零件",
    icon: (
      <Icon>
        <WireBox fill="#fff" />
        <path d="M4 34l5-16 14-5 13 6 2 18-16 4z" fill="#b5edc0" stroke="#178c36" />
        <Spark />
        <PlusBadge />
      </Icon>
    ),
  },
  {
    label: "毛坯",
    icon: (
      <Icon>
        <WireBox fill="#fbe2b0" />
        <path d="M11 12l13-5 17 6v8l-18 6-4-8z" fill="#f59331" stroke="#c0610e" strokeWidth="1.5" />
        <Spark />
        <PlusBadge />
      </Icon>
    ),
  },
  {
    label: "刀轨",
    icon: (
      <Icon>
        <path d="M2 38V4h10l3 4h14v30z" fill="#fbe2b0" strokeWidth="1.5" />
        <path d="M9 38V22l9-5h18v8l-16 15z" fill="#e6f5ea" stroke="#178c36" />
        <path d="M12 22l8-3M17 24l8-5M21 28l9-8" stroke="#235a9f" />
        <Spark />
        <PlusBadge />
      </Icon>
    ),
  },
  {
    label: "程序",
    icon: (
      <Icon>
        <path d="M2 12l20-9h14l-12 10-3 28-19-7z" fill="#f2f2f2" strokeWidth="1.5" />
        <path d="M2 12l20-9M8 13l20-9c-8 5-12 12-13 24M3 12h6l-2 22" stroke="#178c36" />
        <path d="M14 12l17-8M18 15l-4 20M20 13l15-6" stroke="#235a9f" />
        <Spark />
        <PlusBadge />
      </Icon>
    ),
  },
  { label: "计算", icon: <FaRunning className="size-11 text-[#2f9a44]" /> },
  {
    label: "全局过滤",
    icon: (
      <Icon>
        <path d="M1 27V3l3-2h6l2 3h20v23z" fill="#fbe2b0" strokeWidth="1.5" />
        <path d="M13 37l11-4 6 6h12l-5-4-11 1z" stroke="#235a9f" />
        <path d="M26 26v16M38 18v18" stroke="#d2353d" />
      </Icon>
    ),
  },
  {
    label: "导航器",
    icon: (
      <Icon>
        <circle cx="22" cy="22" r="13" stroke="#4353e8" strokeWidth="4" />
        {[0, 60, 120].map((a) => (
          <g key={a} transform={`rotate(${a} 22 22)`}>
            <path d="M22 2v40" stroke="#4353e8" />
            <circle cx="22" cy="3" r="3" fill="#4353e8" stroke="none" />
            <circle cx="22" cy="41" r="3" fill="#4353e8" stroke="none" />
          </g>
        ))}
        <circle cx="22" cy="22" r="3" fill="#fff" stroke="none" />
      </Icon>
    ),
  },
  {
    label: "机床模拟",
    icon: (
      <Icon>
        <Mill />
      </Icon>
    ),
  },
  {
    label: "残留毛坯",
    muted: true,
    icon: (
      <Icon>
        <WireBox fill="#ececec" stroke="#c2c2c2" />
        <path d="M8 13l8-4 26-1v10l-16 6-12-3z" fill="#dcdcdc" stroke="#c2c2c2" strokeWidth="1.5" />
      </Icon>
    ),
  },
];

function ToolStrip() {
  return (
    <aside className="w-[94px] shrink-0 pt-[1px]">
      <span className="ml-[1px] block h-2 w-[17px] border-2 border-[#e8903c] bg-[#ffcb80]" />
      <div className="mt-[2px] rounded-tr-[5px] rounded-br-[5px] border-t-2 border-b-2 border-[#c4c4c4] bg-white pb-1">
        <svg className="mt-[3px] mr-[4px] mb-[3px] ml-auto block h-[10px] w-[24px]" viewBox="0 0 24 10" fill="#8fa9bd" aria-hidden="true">
          {[0, 6, 12, 18].map((x) => (
            <path key={x} d={`M${x} 0h4v3h-4zM${x} 6h4v3h-4z`} />
          ))}
        </svg>
        {tools.map((t) => (
          <button
            key={t.label}
            type="button"
            disabled={t.muted}
            className={clsx("flex h-[76px] w-[82px] flex-col items-center pt-[7px] text-[17px] leading-[24px] whitespace-nowrap", t.muted && "text-[#9d9d9d]")}
          >
            {t.icon}
            {t.label}
          </button>
        ))}
        <button type="button" aria-label="更多工具" className="flex h-[28px] w-[80px] items-center justify-center">
          <Icon size="h-[10px] w-[9px]" box="0 0 9 10">
            <path d="M1 1l3.500 3L8 1M1 6l3.500 3L8 6" strokeWidth="1.5" />
          </Icon>
        </button>
      </div>
    </aside>
  );
}

const columns = [
  { name: "状态", width: "w-[78px]" },
  { name: "刀轨/程序名称", width: "w-[188px]" },
  { name: "轨可见", width: "w-[37px]" },
  { name: "刀具", width: "w-[35px]" },
  { name: "显示毛坯", width: "w-[50px]" },
  { name: "零件余量", width: "w-[42px]" },
  { name: "更新毛坯", width: "w-[33px]" },
  { name: "直径", width: "w-[51px]" },
  { name: "转速", width: "w-[56px]" },
  { name: "进给率", width: "w-[66px]" },
  { name: "颜", width: "w-[10px]" },
  { name: "线宽", width: "w-[25px]" },
  { name: "坐标系", width: "w-[65px]" },
];

const procedures = [
  { cn: "精公", tail: " (2 P)", group: true, mode: true, bold: true },
  { cn: "目标零件", tail: "_146", done: true, mode: true },
  { cn: "边界框毛坯", tail: "_147", done: true, mode: true, cyan: true },
  { cn: "", tail: "TP_MODEL", group: true },
  { cn: "2.5轴-轮廓铣", tail: "_149" },
  { cn: "2.5轴-轮廓铣", tail: "_150" },
  { cn: "2.5轴-轮廓铣", tail: "_151" },
  { cn: "体积铣-环绕粗铣", tail: "_152" },
  { cn: "曲面铣削-所有", tail: "_153" },
  { cn: "清角-清根", tail: "_154" },
  { cn: "2.5轴-传统", tail: "_155" },
];

function Status({ done, first }: { done?: boolean; first?: boolean }) {
  return (
    <svg className="mx-auto block size-4" viewBox="0 0 16 16" aria-label="完成">
      <ellipse cx="7" cy="10" rx="6" ry="5" fill={done ? "#17c728" : "#a9a9a9"} />
      <path d="M3 8l4 4 7-9" fill="none" stroke="#0a7d16" strokeWidth="4" />
      <path d="M3 8l4 4 7-9" fill="none" stroke="#1ee82e" strokeWidth="2" />
      {first && <path d="M.5.5h8v6h-8zM2 2.500h1M4 2.500h3M2 4.500h1M4 4.500h3" fill="#fff" stroke="#555" />}
    </svg>
  );
}

function Expander({ open = false, muted = false, className }: { open?: boolean; muted?: boolean; className?: string }) {
  return (
    <svg
      className={clsx("block size-[13px] shrink-0", className)}
      viewBox="0 0 13 13"
      fill="#fff"
      stroke={muted ? "#a7a38f" : "#222"}
      shapeRendering="crispEdges"
      aria-hidden="true"
    >
      <path d={open ? "M1 1h11v11H1zM3 7h7" : "M1 1h11v11H1zM3 7h7M7 3v7"} />
    </svg>
  );
}

function ProcedureList() {
  return (
    <div className="flex h-[299px] overflow-hidden border-t-2 border-b-2 border-l-2 border-[#6f6f6f] bg-white">
      <div className="min-w-0 grow overflow-hidden">
        <table className="w-[736px] table-fixed border-separate border-spacing-0 text-[18px] whitespace-nowrap text-black">
          <thead>
            <tr className="h-[20px] bg-[#ff8022] text-white">
              {columns.map((c) => (
                <th key={c.name} className={clsx("border-r border-b border-[#8f5a34] p-0 font-light", c.width)}>
                  <span className="flex h-[19px] justify-center overflow-hidden leading-5">{c.name}</span>
                </th>
              ))}
            </tr>
          </thead>
          <tbody className="font-['Liberation_Sans','Noto_Sans_CJK_SC',sans-serif]">
            {procedures.map((p, i) => {
              const line = p.bold && "border-b-[3px] border-black";
              return (
                <tr key={i} className={clsx("leading-[22px]", p.bold ? "h-[25px]" : "h-[26px]")}>
                  <td className="p-0 pr-[20px]">
                    <Status done={p.done || p.bold} first={p.bold} />
                  </td>
                  <td colSpan={9} className={clsx("p-0", p.bold && "font-bold")}>
                    <div className={clsx("-ml-[29px] flex items-center", line, p.bold ? "h-[25px]" : "h-[26px]")}>
                      <span className="flex w-[30px] shrink-0 justify-center">{p.group && <Expander open />}</span>
                      <span className={clsx(!p.bold && "font-light")}>{p.cn}</span>
                      <span className="whitespace-pre">{p.tail}</span>
                      {p.cyan && (
                        <svg className="ml-[144px] block h-6 w-3" viewBox="0 0 12 24" fill="#ccc" stroke="#333" aria-hidden="true">
                          <circle cx="8" cy="7" r="3" />
                          <path d="M8 10v5" />
                          <path d="M2 15h5l-1 5H2z" fill="#e8a050" />
                        </svg>
                      )}
                    </div>
                  </td>
                  <td className={clsx("p-0", line)}>{p.cyan && <span className="block h-6 w-2 border border-[#8ab] bg-[#00ffff]" />}</td>
                  <td className={clsx("p-0", line)} />
                  <td className={clsx("p-0 pl-[2px]", line, p.bold ? "font-bold" : "text-[#8a8a8a]")}>{p.mode && "MODE"}</td>
                </tr>
              );
            })}
          </tbody>
        </table>
      </div>
      <div className="w-[27px] shrink-0 bg-[#f0f0f0] pt-[24px]">
        <span className="mx-auto block h-[52px] w-[11px] bg-[#858585]" />
      </div>
    </div>
  );
}

const params = [
  { name: "刀轨参数", level: 1, open: true },
  { name: "切入&切出", level: 2 },
  { name: "安全平面&坐标系", level: 2 },
  { name: "切入&切出点", level: 2 },
  { name: "轮廓设置", level: 2 },
  { name: "公差&余量", level: 2 },
  { name: "刀具轨迹", level: 2 },
  { name: "刀柄和夹持", level: 2, value: "无" },
  { name: "毛坯", level: 2, value: "高级" },
  { name: "刀具&夹持", level: 1, pin: true, button: "8" },
  { name: "机床参数", level: 1, pin: true },
  { name: "几何", level: 1 },
];

function Pin() {
  return (
    <svg className="block size-4 shrink-0 self-start" viewBox="0 0 13 13" fill="none" stroke="#8c8c8c" aria-hidden="true">
      <path d="M7 5H1v7h8V8M3 8h4" />
      <circle cx="10" cy="3" r="2.5" fill="#999" />
      <path d="M10 5v3" strokeWidth="2" />
    </svg>
  );
}

function ParameterGrid() {
  return (
    <div className="flex min-h-0 grow overflow-hidden border-t-[3px] border-l-2 border-[#6f6f6f] bg-[#f0f0f0]">
      <div className="min-w-0 grow">
        <table className="w-full table-fixed border-separate border-spacing-0 text-[20px] leading-[26px] text-[#969696]">
          <thead>
            <tr className="h-[24px] bg-[#bac3d4]">
              <th className="w-[425px] p-0" aria-label="参数" />
              <th className="p-0" aria-label="值" />
            </tr>
          </thead>
          <tbody>
            {params.map((p) => (
              <tr key={p.name} className="h-[29px] bg-white">
                <td className="border-t border-r border-[#a9a9a9] p-0">
                  <div className={clsx("flex h-7 items-center overflow-hidden whitespace-nowrap", p.level === 2 && "pl-6")}>
                    <span className="flex h-full w-[17px] shrink-0">{(p.level === 2 || p.pin) && <Pin />}</span>
                    <Expander open={p.open} muted className="mr-[5px]" />
                    <span className="font-medium">{p.name}</span>
                  </div>
                </td>
                <td className="border-t border-[#a9a9a9] p-0 font-light">
                  {p.button ? (
                    <button
                      type="button"
                      className="ml-px block h-[27px] w-[364px] border-r-2 border-b-2 border-[#6f6f6f] bg-[#f0f0f0] text-[20px] leading-6 font-normal"
                    >
                      {p.button}
                    </button>
                  ) : (
                    <span className="block pl-[3px] leading-6">{p.value}</span>
                  )}
                </td>
              </tr>
            ))}
          </tbody>
        </table>
        <span className="block h-px bg-[#6f6f6f]" />
      </div>
      <div className="w-[27px] shrink-0 pt-[50px] pb-[32px]">
        <span className="mx-auto block h-full w-[11px] bg-[#858585]" />
      </div>
    </div>
  );
}

function Dock() {
  return (
    <section className="flex w-[837px] shrink-0 flex-col pt-[1px]">
      <div className="flex h-[31px] shrink-0 items-center justify-between bg-[#bdcbd9] px-[6px] pt-[2px] text-black">
        <h2 className="text-[18px] leading-6">NC程序管理器</h2>
        <button type="button" aria-label="固定" className="pr-[4px]">
          <Icon size="h-[18px] w-3" box="0 0 12 18">
            <path d="M3 1h6v9H3zM8 1v9M0 11h12M6 11v6" stroke="#111" strokeWidth="1.5" />
          </Icon>
        </button>
      </div>
      <div className="flex min-h-0 grow flex-col border-r-2 border-b-2 border-[#8a8a8a] pt-1 pl-[3px]">
        <div className="flex min-h-0 grow flex-col border-r border-[#fff] pr-[2px]">
          <ProcedureList />
          <div className="mt-[9px] h-[148px] shrink-0 border-t border-black px-[7px] pt-[9px] text-[16px] leading-6 font-light text-[#8c8c8c]">
            <p>主选项</p>
            <p className="flex items-center pt-[12px] text-[17px]">
              <Icon size="size-[23px]" box="0 0 24 24">
                <path d="M1 8l9-6 7 4v7l6 4v3l-8 4-14-8z" fill="#b3b3b3" stroke="#858585" strokeWidth="1.5" />
                <path d="M1 8l7 4 9-6M8 12v6M8 16l7 4 8-4" stroke="#858585" strokeWidth="1.5" />
              </Icon>
              2.5轴
            </p>
            <hr className="mt-[22px] border-[#a5a5a5]" />
          </div>
          <ParameterGrid />
        </div>
      </div>
      <div className="h-[56px] shrink-0">
        <button type="button" className="ml-px h-[31px] bg-[#fafafa] px-[8px] text-[18px] leading-6 font-bold text-black">
          NC计算监视器
        </button>
      </div>
    </section>
  );
}

function Scene() {
  return (
    <svg className="block h-full w-full" viewBox="943 161 1589 1157" preserveAspectRatio="xMidYMid slice" fill="none" stroke="#0d1118" strokeWidth="1.5">
      <defs>
        <linearGradient id="sky" x1="0" y1="0" x2="0" y2="1">
          <stop offset="0" stopColor="#8998ac" />
          <stop offset="1" stopColor="#c3c7d3" />
        </linearGradient>
        <linearGradient id="boss" x1="0" y1="0" x2="1" y2="0">
          <stop offset="0" stopColor="#8196ba" />
          <stop offset=".4" stopColor="#94a7cc" />
          <stop offset=".62" stopColor="#a4b6db" />
          <stop offset=".8" stopColor="#9aacd1" />
          <stop offset="1" stopColor="#8093b5" />
        </linearGradient>
        <linearGradient id="chamfer" x1="0" y1="0" x2="1" y2="0">
          <stop offset="0" stopColor="#73829f" />
          <stop offset=".15" stopColor="#8c9fc6" />
          <stop offset=".26" stopColor="#a5b7dd" />
          <stop offset=".36" stopColor="#fff" />
          <stop offset=".55" stopColor="#fff" />
          <stop offset=".66" stopColor="#9fb1d8" />
          <stop offset=".78" stopColor="#7383a1" />
          <stop offset="1" stopColor="#5f6c84" />
        </linearGradient>
        <linearGradient id="corner" x1="0" y1="0" x2="1" y2="0">
          <stop offset="0" stopColor="#97a8cd" />
          <stop offset=".25" stopColor="#9dafd6" />
          <stop offset="1" stopColor="#5d6a81" />
        </linearGradient>
        <linearGradient id="leftCorner" x1="0" y1="0" x2="1" y2="0">
          <stop offset="0" stopColor="#71809c" />
          <stop offset="1" stopColor="#97a8cd" />
        </linearGradient>
        <linearGradient id="pad" x1="0" y1="0" x2="1" y2="0">
          <stop offset="0" stopColor="#8fa2ca" />
          <stop offset="1" stopColor="#788bb0" />
        </linearGradient>
        <linearGradient id="band" x1="0" y1="0" x2="1" y2="1">
          <stop offset="0" stopColor="#c7d5f6" />
          <stop offset="1" stopColor="#788aae" />
        </linearGradient>
        <linearGradient id="fillet" x1="0" y1="0" x2="1" y2="1">
          <stop offset=".2" stopColor="#8fa2c8" />
          <stop offset=".55" stopColor="#fff" />
          <stop offset="1" stopColor="#b4c3e6" />
        </linearGradient>
        <linearGradient id="flank" x1="0" y1="0" x2="1" y2="0">
          <stop offset="0" stopColor="#6c7a93" />
          <stop offset="1" stopColor="#556177" />
        </linearGradient>
      </defs>
      <rect x="943" y="160" width="1589" height="1158" fill="url(#sky)" stroke="none" />

      {/* base plate */}
      <path d="M1041 880L1754 1136L1753 1202L1039 946z" fill="#97a8cd" />
      <path d="M1006 845Q1010 868 1041 880L1039 946Q1004 930 1004 905z" fill="url(#leftCorner)" />
      <path d="M1754 1136C1785 1147 1830 1146 1850 1123L1847 1188C1828 1213 1785 1213 1753 1202z" fill="url(#corner)" />
      <path d="M1850 1123L2160 802Q2168 792 2168 780L2164 857Q2162 864 2154 870L1847 1188z" fill="#5a667c" />
      <path
        d="M1326 497Q1345 481 1380 481Q1412 481 1434 493L1939 674L2133 744Q2168 756 2168 780Q2167 795 2160 802L1850 1123C1830 1146 1785 1147 1754 1136L1041 880Q990 856 1014 823L1128 700z"
        fill="#6c7a93"
      />
      <path d="M2160 802L2157 868" />

      {/* rear left corner */}
      <path d="M1303 522Q1350 503 1412 501M1303 522L1266 559M1261 617L1219 663Q1213 667 1195 667Q1170 669 1150 679L1112 717" />
      <path d="M1325 546Q1280 553 1266 559Q1251 568 1250 580L1247 611L1262 617Q1283 575 1325 546z" fill="#9aabd3" />

      {/* left pad */}
      <path d="M1097 731Q1104 720 1112 717Q1175 695 1246 716L1262 743L1259 767L1182 745z" fill="url(#pad)" />
      <path d="M1095 770L1097 731Q1170 705 1258 767L1262 740L1254 866z" fill="#8ea2c6" />

      {/* boss */}
      <path d="M1246 686Q1250 720 1261 743L1254 866Q1300 942 1416 989Q1530 1032 1671 1016L1675 880L1600 890Q1380 880 1270 740z" fill="url(#boss)" />
      <path d="M1422 864L1416 989" />
      <path d="M1248 654Q1232 690 1241 715M1252 716L1259 767" />

      {/* right ledges */}
      <path d="M1932 669Q2010 720 2061 797L2077 814" />
      <path d="M1938 672Q2016 726 2075 812" />
      <path d="M1943 694Q1950 800 1818 873Q1780 889 1735 893L1727 884Q1860 860 1915 770z" fill="#64718a" />
      <path d="M1942 700Q1935 790 1820 856Q1780 876 1727 884M1817 850L1818 873" />
      <ellipse cx="1592" cy="687" rx="346" ry="207" transform="rotate(2.5 1592 687)" fill="url(#chamfer)" />
      <ellipse cx="1592" cy="673" rx="335" ry="200" transform="rotate(2.7 1592 673)" fill="#6c7a93" />

      {/* front right wedge */}
      <path d="M1733 893Q1830 945 1878 989Q1886 998 1887 1012Q1800 930 1675 918z" fill="url(#band)" />
      <path d="M1675 918Q1800 935 1887 1012L1888 1052L1671 1016z" fill="#a3b4da" />
      <path d="M1727 884L1733 893L1688 918Q1676 919 1677 913z" fill="url(#fillet)" />
      <path d="M1878 989L1912 952Q1928 970 1928 989L1926 1012L1888 1052L1887 1012z" fill="url(#flank)" />
      <path d="M1888 1028L1928 989" />
      <path d="M1961 779L1864 878Q1850 892 1857 902L1899 936L1961 871z" fill="#5d6a82" />
      <path d="M1899 936L1912 952" />

      {/* rear right wedge */}
      <path d="M1961 871V780Q1965 772 1972 779Q2030 822 2038 857L2040 896L1965 871z" fill="#8fa2ca" />
      <path d="M1971 779L1970 872" />
      <path d="M2026 832L2061 797L2077 814L2079 854L2040 896L2038 857z" fill="#626f88" />
      <path d="M2040 870L2078 830" />

      <ellipse cx="1590" cy="676" rx="702" ry="418" transform="rotate(2.1 1590 676)" />
      <path d="M981 458L2202 895M1934 319L1249 1034" />

      <g stroke="#f3c67c">
        <path d="M1450 399L2052 616L1733 948L1129 733z" />
        <path d="M1291 518L1895 735L1887 970L1283 754z" />
        <path d="M1756 456L1747 698L1426 1033L1434 792z" />
      </g>

      <g stroke="#e81018">
        <path d="M1592 677V652M1592 632L1587 652H1598zM1592 677L1606 662M1618 650L1603 660L1610 666zM1592 677L1622 690M1640 692L1620 684L1618 693z" />
      </g>
      <g fill="#e81018" stroke="none" className="font-['Liberation_Sans',sans-serif] text-[21px]">
        <text x="1588" y="618">Z</text>
        <text x="1621" y="639">Y</text>
        <text x="1590" y="700">MODEL</text>
        <text x="1652" y="700">X</text>
      </g>
    </svg>
  );
}

function StatusBar() {
  const cell = "h-full overflow-hidden border-t border-l border-[#9c9c9c] pl-[5px] whitespace-nowrap";
  return (
    <footer className="relative flex h-[56px] shrink-0 justify-end gap-[3px] pt-[35px] text-[19px] leading-[27px] text-black">
      <span className={clsx(cell, "w-[121px]")}>TP_TP_MODEL</span>
      <span className={clsx(cell, "w-[122px]")}>刀具</span>
      <span className={clsx(cell, "w-[48px] text-[#777]")}>CAP</span>
      <span className={clsx(cell, "w-[58px]")}>NUM</span>
      <span className={clsx(cell, "w-[55px] text-[#777]")}>SCRL</span>
      <p className="absolute top-[33px] right-1 flex gap-3 font-['Liberation_Mono','Noto_Sans_CJK_SC',monospace] text-[14px] leading-5 font-light whitespace-nowrap text-[#555] [text-shadow:1px_1px_0_#fff]">
        <span>UG爱好者论坛</span>
        <span>WWW.UGSNX.COM</span>
      </p>
    </footer>
  );
}

function AboutDialog({ onClose }: { onClose: () => void }) {
  return (
    <div
      role="dialog"
      aria-labelledby="about-title"
      className="absolute top-[298px] left-[270px] w-[675px] overflow-hidden rounded-[12px] bg-[#f0f0f0] text-black shadow-[0_20px_60px_rgba(0,0,0,0.5),0_0_2px_rgba(0,0,0,0.5)]"
    >
      <div className="flex h-[42px] items-center justify-between bg-white pr-[16px] pl-[11px]">
        <h2 id="about-title" className="text-[18px] leading-6">
          关于 Cimatron
        </h2>
        <button type="button" aria-label="关闭窗口" onClick={onClose}>
          <Icon size="size-4" box="0 0 16 16">
            <path d="M1 1l14 14M15 1L1 15" stroke="#111" strokeWidth="1.5" />
          </Icon>
        </button>
      </div>
      <div className="h-[468px] bg-linear-to-b from-[#fafafa] from-25% to-[#d6d6d6] to-85%">
        <svg className="block h-[116px] w-full" viewBox="0 0 675 116" preserveAspectRatio="none" aria-label="CIMATRON">
          <defs>
            <linearGradient id="flare" x1="0" y1="0" x2="1" y2="0">
              <stop offset="0" stopColor="#f58a24" />
              <stop offset=".6" stopColor="#ef7a1e" />
              <stop offset="1" stopColor="#d96518" />
            </linearGradient>
          </defs>
          <path d="M0 0h675v107L511 86 0 116z" fill="url(#flare)" />
          <path d="M0 0h115L60 22 0 40z" fill="#ea7a1d" />
          <path d="M115 0h190L245 22 140 15z" fill="#ec741c" />
          <path d="M0 60l70-38 70-7 105 7 14 47-115 3-83 30z" fill="#f68d26" />
          <path d="M0 116l61-14 83-30 33-16 82 13 27 29z" fill="#f0a12d" />
          <path d="M245 22l60-10 52 45-16 15-55 26-27-29z" fill="#f38d24" />
          <path d="M286 98l55-26 80 16z" fill="#f2831f" />
          <path d="M305 12L393 0l50 27-22 61-80-16 16-15z" fill="#ee7a1d" />
          <path d="M393 0h282v42L511 86l-90 2 22-61z" fill="#d5641a" />
          <path d="M500 0h175v37l-136 2z" fill="#a94c13" />
          <path d="M443 27l57-27 39 39-20 22z" fill="#ca5b17" />
          <path d="M539 39l70-12 66 10v5l-100 26z" fill="#bc5315" />
          <path d="M609 27l66-27v37z" fill="#933d0d" />
          <path d="M511 86l164-44v34z" fill="#e77e36" />
          <path d="M620 57l55-15v34l-75 5z" fill="#eb8f4c" />
          <path d="M511 86l164-10v31z" fill="#f9b440" />
          <path d="M511 86l146-9-19 25z" fill="#fbc85c" />
          <circle cx="76" cy="52" r="33" fill="#f6a13c" stroke="#fff" strokeWidth="2" />
          <circle cx="79" cy="53" r="28" fill="#e86f1c" />
          <path d="M95 35H76C60 35 56 45 56 55c0 12 5 17 15 17 14 0 20-7 22-25H80c-1 9-3 14-8 14-3 0-4-2-4-6 0-7 3-11 9-11h14z" fill="#fff" />
          <text x="120" y="65" fill="#fff" className="font-['Lato',sans-serif] text-[35px] font-normal">
            CIMATRON
          </text>
        </svg>
        <div className="flex flex-col items-start pt-[94px] pl-[43px] text-[16px] leading-[35px]">
          <p>
            版本 <span className="text-[18px]">2025.0</span>
          </p>
          <p className="text-[18px]">Copyright (c) 2024 Cimatron, Inc</p>
          <p>版权所有</p>
          <p className="flex">
            <span className="w-[151px]">产品号:</span>
            <span className="text-[18px]">2025,0300,2024,780( SP3 )</span>
          </p>
          <a href="#license" className="mt-[21px] font-['Liberation_Sans','Noto_Sans_CJK_SC',sans-serif] text-[#0808c8] underline">
            查看用户授权文件协议
          </a>
          <a href="#site" className="font-['Liberation_Sans','Noto_Sans_CJK_SC',sans-serif] text-[#0808c8] underline">
            [思美创: www.Cimatron.com]
          </a>
        </div>
      </div>
      <div className="flex h-[45px] items-start justify-center pt-[6px] pl-[6px]">
        <button
          type="button"
          onClick={onClose}
          className="h-[35px] w-[142px] border-2 border-[#0c1420] bg-[#969a9d] text-[16px] leading-6 inset-ring inset-ring-[#1b6cab]"
        >
          关闭
        </button>
      </div>
    </div>
  );
}

export default function App() {
  const [about, setAbout] = useState(true);

  return (
    <div className="relative flex h-screen flex-col overflow-hidden bg-[#f0f0f0] font-['Open_Sans','Noto_Sans_CJK_SC',sans-serif] text-[#2e2e2e]">
      <TitleBar />
      <Ribbon />
      <main className="flex min-h-0 grow">
        <ToolStrip />
        <div className="w-[6px] shrink-0" />
        <Dock />
        <div className="flex min-w-0 grow flex-col pl-[5px]">
          <div className="mr-2 min-h-0 grow border-t-2 border-l border-[#5f6670]">
            <Scene />
          </div>
          <StatusBar />
        </div>
      </main>
      {about && <AboutDialog onClose={() => setAbout(false)} />}
    </div>
  );
}
